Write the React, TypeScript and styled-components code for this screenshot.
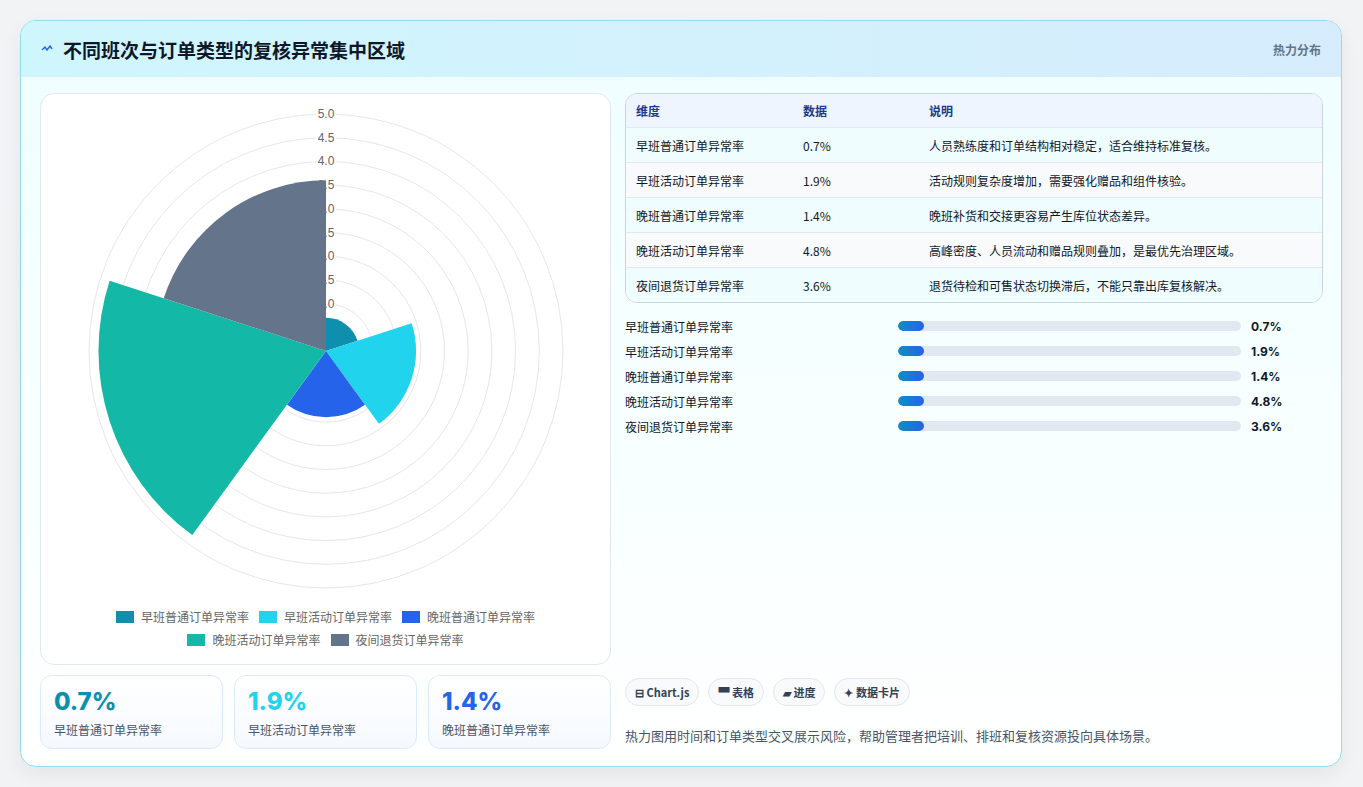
import React from "react";
import styled, { createGlobalStyle } from "styled-components";

const GlobalStyle = createGlobalStyle`
  * { box-sizing: border-box; }
  body {
    margin: 0;
    background: #f1f3f5;
    font-family: "Noto Sans CJK SC", "Noto Sans", sans-serif;
    color: #0f172a;
  }
`;

const Page = styled.div`
  padding: 20px 20px 20px 20px;
  height: 787px;
`;

const Card = styled.div`
  width: 1322px;
  height: 747px;
  border: 1px solid #8fdcea;
  border-radius: 16px;
  background: linear-gradient(180deg, #effeff 0%, #f8ffff 60%, #ffffff 100%);
  box-shadow: 0 8px 20px rgba(0, 0, 0, 0.06);
  overflow: hidden;
  display: flex;
  flex-direction: column;
`;

const Header = styled.div`
  height: 56px;
  flex-shrink: 0;
  display: flex;
  align-items: center;
  justify-content: space-between;
  padding: 0 20px;
  background: linear-gradient(90deg, #cff6fc 0%, #d6ecfd 100%);
`;

const Title = styled.div`
  display: flex;
  align-items: center;
  gap: 10px;
  font-size: 19px;
  font-weight: 700;
  color: #0f172a;
`;

const Tag = styled.div`
  font-size: 12px;
  font-weight: 600;
  color: #64748b;
`;

const Body = styled.div`
  flex: 1;
  display: grid;
  grid-template-columns: 571px 1fr;
  gap: 14px;
  padding: 16px 18px 18px 19px;
`;

const Column = styled.div`
  display: flex;
  flex-direction: column;
  gap: 10px;
  min-height: 0;
`;

const ChartCard = styled.div`
  height: 572px;
  background: #fff;
  border: 1px solid #e2e8f0;
  border-radius: 14px;
  display: flex;
  flex-direction: column;
  align-items: center;
`;

const Legend = styled.div`
  display: flex;
  flex-wrap: wrap;
  justify-content: center;
  gap: 6px 10px;
  width: 440px;
  margin-top: 4px;
`;

const LegendItem = styled.div`
  display: flex;
  align-items: center;
  gap: 7px;
  font-size: 12px;
  color: #666;
`;

const Swatch = styled.span<{ $c: string }>`
  width: 18px;
  height: 12px;
  background: ${(p) => p.$c};
`;

const Stats = styled.div`
  display: grid;
  grid-template-columns: repeat(3, 1fr);
  gap: 11px;
`;

const Stat = styled.div`
  height: 74px;
  border: 1px solid #dbeafe;
  border-radius: 12px;
  background: linear-gradient(180deg, #ffffff, #f5f9ff);
  padding: 11px 13px;
`;

const StatValue = styled.div<{ $c: string }>`
  font-family: "Inter", "Noto Sans", sans-serif;
  font-size: 24px;
  font-weight: 800;
  color: ${(p) => p.$c};
  line-height: 30px;
`;

const StatLabel = styled.div`
  font-size: 12px;
  color: #475569;
  margin-top: 4px;
`;

const Table = styled.div`
  border: 1px solid #cbd5e1;
  border-radius: 12px;
  overflow: hidden;
`;

const Row = styled.div<{ $bg: string; $head?: boolean }>`
  display: grid;
  grid-template-columns: 167px 126px 1fr;
  align-items: center;
  height: ${(p) => (p.$head ? "33px" : "35px")};
  padding-left: 10px;
  background: ${(p) => p.$bg};
  border-top: ${(p) => (p.$head ? "none" : "1px solid #e2e8f0")};
  font-size: 12px;
  font-weight: ${(p) => (p.$head ? 700 : 400)};
  color: ${(p) => (p.$head ? "#1e3a8a" : "#0f172a")};
`;

const Bars = styled.div`
  display: flex;
  flex-direction: column;
  gap: 7px;
  margin-top: 4px;
  margin-right: 34px;
`;

const BarRow = styled.div`
  display: grid;
  grid-template-columns: 263px 1fr 38px;
  align-items: center;
  gap: 10px;
  font-size: 12px;
  height: 18px;
`;

const Track = styled.div`
  height: 10px;
  border-radius: 5px;
  background: #e2e8f0;
  overflow: hidden;
`;

const Fill = styled.div`
  height: 100%;
  border-radius: 5px;
  background: linear-gradient(90deg, #0e8fc2, #2563eb);
`;

const BarValue = styled.div`
  font-weight: 700;
  font-family: "Inter", "Noto Sans", sans-serif;
`;

const Spacer = styled.div`
  flex: 1;
`;

const Chips = styled.div`
  display: flex;
  gap: 9px;
`;

const Chip = styled.div`
  height: 28px;
  padding: 0 9px;
  border: 1px solid #e2e8f0;
  border-radius: 14px;
  background: #f8fafc;
  display: flex;
  align-items: center;
  gap: 4px;
  font-size: 11px;
  font-weight: 600;
  color: #334155;
`;

const Note = styled.div`
  font-size: 13px;
  color: #475569;
  margin-top: 10px;
  margin-bottom: 4px;
`;

const data = [
  { name: "早班普通订单异常率", v: 0.7, c: "#0e8fae", d: "人员熟练度和订单结构相对稳定，适合维持标准复核。" },
  { name: "早班活动订单异常率", v: 1.9, c: "#22d3ee", d: "活动规则复杂度增加，需要强化赠品和组件核验。" },
  { name: "晚班普通订单异常率", v: 1.4, c: "#2563eb", d: "晚班补货和交接更容易产生库位状态差异。" },
  { name: "晚班活动订单异常率", v: 4.8, c: "#14b8a6", d: "高峰密度、人员流动和赠品规则叠加，是最优先治理区域。" },
  { name: "夜间退货订单异常率", v: 3.6, c: "#64748b", d: "退货待检和可售状态切换滞后，不能只靠出库复核解决。" },
];

const CX = 285;
const CY = 257;
const R = 237;

function sector(r: number, a0: number, a1: number) {
  const p = (a: number) => [CX + r * Math.cos(a), CY + r * Math.sin(a)];
  const [x0, y0] = p(a0);
  const [x1, y1] = p(a1);
  return `M${CX} ${CY}L${x0} ${y0}A${r} ${r} 0 0 1 ${x1} ${y1}Z`;
}

function PolarChart() {
  const ticks = Array.from({ length: 10 }, (_, i) => (i + 1) * 0.5);
  const step = (Math.PI * 2) / data.length;
  return (
    <svg width="569" height="510" style={{ display: "block" }}>
      {ticks.map((t) => (
        <circle key={t} cx={CX} cy={CY} r={(t / 5) * R} fill="none" stroke="#e5e7eb" />
      ))}
      {ticks.map((t) => (
        <g key={"l" + t}>
          <rect x={CX - 10} y={CY - (t / 5) * R - 7} width="20" height="14" fill="#fff" />
          <text x={CX} y={CY - (t / 5) * R + 4} textAnchor="middle" fontSize="12" fill="#666" fontFamily="Liberation Sans, sans-serif">
            {t.toFixed(1)}
          </text>
        </g>
      ))}
      {data.map((d, i) => {
        const a0 = -Math.PI / 2 + i * step;
        return <path key={d.name} d={sector((d.v / 5) * R, a0, a0 + step)} fill={d.c} />;
      })}
    </svg>
  );
}

export default function App() {
  return (
    <Page>
      <GlobalStyle />
      <Card>
        <Header>
          <Title>
            <svg width="12" height="10" viewBox="0 0 12 10">
              <path d="M1 6 L4 3 L6 6 L9 2 L11 5" fill="none" stroke="#2563eb" strokeWidth="1.4" />
            </svg>
            不同班次与订单类型的复核异常集中区域
          </Title>
          <Tag>热力分布</Tag>
        </Header>
        <Body>
          <Column>
            <ChartCard>
              <PolarChart />
              <Legend>
                {data.map((d) => (
                  <LegendItem key={d.name}>
                    <Swatch $c={d.c} />
                    {d.name}
                  </LegendItem>
                ))}
              </Legend>
            </ChartCard>
            <Stats>
              {data.slice(0, 3).map((d) => (
                <Stat key={d.name}>
                  <StatValue $c={d.c}>{d.v}%</StatValue>
                  <StatLabel>{d.name}</StatLabel>
                </Stat>
              ))}
            </Stats>
          </Column>
          <Column>
            <Table>
              <Row $head $bg="#eef5fe">
                <div>维度</div>
                <div>数据</div>
                <div>说明</div>
              </Row>
              {data.map((d, i) => (
                <Row key={d.name} $bg={i % 2 ? "#f8fafc" : "#f0fdfe"}>
                  <div>{d.name}</div>
                  <div>{d.v}%</div>
                  <div>{d.d}</div>
                </Row>
              ))}
            </Table>
            <Bars>
              {data.map((d) => (
                <BarRow key={d.name}>
                  <div>{d.name}</div>
                  <Track>
                    <Fill style={{ width: `${Math.max(d.v, 7.7)}%` }} />
                  </Track>
                  <BarValue>{d.v}%</BarValue>
                </BarRow>
              ))}
            </Bars>
            <Spacer />
            <Chips>
              <Chip>⊟ Chart.js</Chip>
              <Chip>▀ 表格</Chip>
              <Chip>▰ 进度</Chip>
              <Chip>✦ 数据卡片</Chip>
            </Chips>
            <Note>热力图用时间和订单类型交叉展示风险，帮助管理者把培训、排班和复核资源投向具体场景。</Note>
          </Column>
        </Body>
      </Card>
    </Page>
  );
}
